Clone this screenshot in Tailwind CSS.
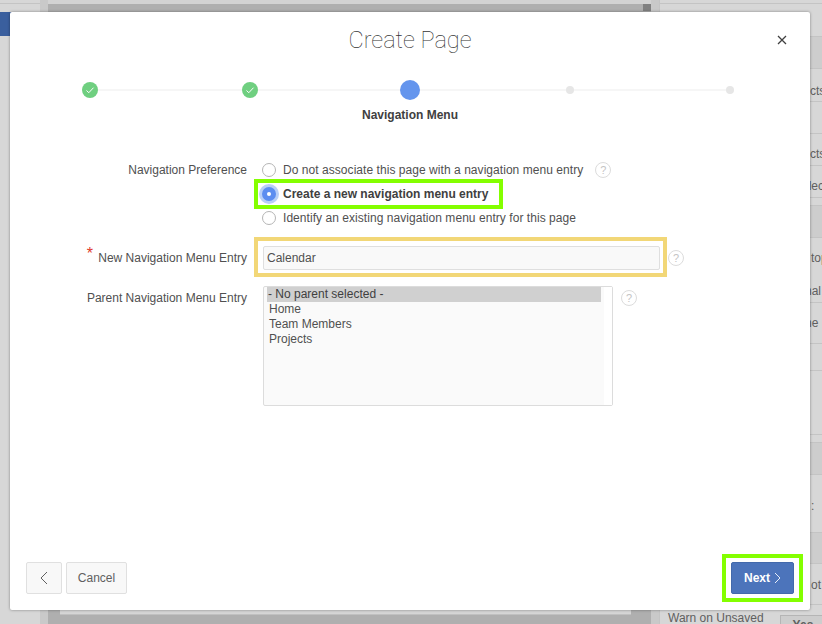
<!DOCTYPE html>
<html lang="en">
<head>
  <meta charset="UTF-8" />
  <title>Create Page</title>
  <script src="https://cdn.jsdelivr.net/npm/@tailwindcss/browser@4"></script>
</head>
<body class="relative w-[822px] h-[624px] overflow-hidden bg-[#d7d7d7] font-['Liberation_Sans',Arial,sans-serif] text-[12px] text-[#404040]">

  <!-- Dimmed page behind the dialog -->
  <div class="flex h-full">
    <div class="w-[40px] flex flex-col">
      <div class="h-[4px] border-b border-[#c4c4c4]"></div>
      <div class="h-[8px]"></div>
      <div class="h-[24px] bg-[#3a5f9e]"></div>
    </div>
    <div class="w-[8px] bg-[#c9c9c9]"></div>
    <div class="w-[603px] bg-[#afafaf] flex flex-col">
      <div class="h-[4px] bg-[#d3d3d3]"></div>
      <div class="h-[7px] flex justify-end"><div class="w-[8px] bg-[#808080]"></div></div>
      <div class="flex-1"></div>
      <div class="h-[9px] ml-[12px] mr-[20px] bg-[#d5d5d5] border-b border-[#c0c0c0]"></div>
      <div class="h-[9px]"></div>
    </div>
    <div class="w-[8px] bg-[#c9c9c9]"></div>
    <div class="flex-1 flex flex-col text-[#606060] whitespace-nowrap overflow-hidden border-l border-[#c4c4c4]">
      <div class="h-[4px] border-b border-[#c4c4c4] shrink-0"></div>
      <div class="h-[32px] shrink-0"></div>
      <div class="h-[33px] shrink-0 bg-[#cdcdcd] border-y border-[#c4c4c4]"></div>
      <div class="h-[32px] shrink-0 pl-[122px] pt-[13px]">Projects</div>
      <div class="h-[32px] shrink-0 border-t border-[#c4c4c4]"></div>
      <div class="h-[32px] shrink-0 pl-[122px] pt-[11px] border-t border-[#c4c4c4]">Projects</div>
      <div class="h-[32px] shrink-0 pl-[134px] pt-[11px] border-t border-[#c4c4c4]">Select</div>
      <div class="h-[8px] shrink-0 border-t border-[#c4c4c4]"></div>
      <div class="h-[33px] shrink-0 bg-[#cdcdcd] border-y border-[#c4c4c4]"></div>
      <div class="h-[32px] shrink-0 pl-[151px] pt-[11px]">top</div>
      <div class="h-[32px] shrink-0 pl-[145px] pt-[12px]">nal</div>
      <div class="h-[41px] shrink-0 pl-[145px] pt-[11px] border-t border-[#c4c4c4]">ne</div>
      <div class="h-[27px] shrink-0 border-t border-[#c4c4c4]"></div>
      <div class="h-[64px] shrink-0 border-t border-[#c4c4c4]"></div>
      <div class="h-[8px] shrink-0 border-t border-[#c4c4c4]"></div>
      <div class="h-[33px] shrink-0 bg-[#cdcdcd] border-y border-[#c4c4c4]"></div>
      <div class="h-[57px] shrink-0 pl-[151px] pt-[22px]">:</div>
      <div class="h-[32px] shrink-0 bg-[#cdcdcd] border-y border-[#c4c4c4]"></div>
      <div class="h-[40px] shrink-0 pl-[151px] pt-[12px]">ot</div>
      <div class="flex pl-[8px] pt-[4px] border-t border-[#c4c4c4]">
        <span>Warn on Unsaved</span>
        <span class="ml-[16px] mt-[6px] px-[12px] h-[20px] bg-[#cdcdcd] border border-[#b5b5b5] font-bold">Yes</span>
      </div>
    </div>
  </div>

  <!-- Dialog -->
  <div class="absolute left-[10px] top-[12px] w-[800px] h-[598px] bg-white rounded-[2px] shadow-[0_0_3px_rgba(0,0,0,0.4)] flex flex-col">

    <!-- Title bar -->
    <div class="relative h-[56px] flex items-center justify-center pt-[1px] shrink-0">
      <h1 class="font-['Roboto',sans-serif] font-thin text-[23.5px] text-[#333]">Create Page</h1>
      <button class="absolute right-[22px] top-[22px] w-[12px] h-[12px] flex items-center justify-center">
        <svg width="10" height="10" viewBox="0 0 10 10" fill="none" stroke="#404040" stroke-width="1.3"><path d="M1 1l8 8M9 1l-8 8"/></svg>
      </button>
    </div>

    <!-- Steps -->
    <div class="relative h-[20px] mt-[12px] mx-[70px] w-[660px] flex items-center justify-between shrink-0">
      <div class="absolute left-[10px] right-[10px] top-[9px] h-[2px] bg-[#f6f6f6]"></div>
      <div class="w-[20px] flex justify-center z-10">
        <div class="w-[16px] h-[16px] rounded-full bg-[#6fcf80] flex items-center justify-center">
          <svg width="10" height="10" viewBox="0 0 10 10" fill="none" stroke="#fff" stroke-width="1"><path d="M1.5 5.5l2.3 2.2 4.7-5"/></svg>
        </div>
      </div>
      <div class="w-[20px] flex justify-center z-10">
        <div class="w-[16px] h-[16px] rounded-full bg-[#6fcf80] flex items-center justify-center">
          <svg width="10" height="10" viewBox="0 0 10 10" fill="none" stroke="#fff" stroke-width="1"><path d="M1.5 5.5l2.3 2.2 4.7-5"/></svg>
        </div>
      </div>
      <div class="w-[20px] h-[20px] rounded-full bg-[#6495ed] z-10"></div>
      <div class="w-[20px] flex justify-center z-10"><div class="w-[8px] h-[8px] rounded-full bg-[#e6e6e6]"></div></div>
      <div class="w-[20px] flex justify-center z-10"><div class="w-[8px] h-[8px] rounded-full bg-[#e6e6e6]"></div></div>
    </div>
    <div class="text-center font-bold mt-[8px] leading-[14px] shrink-0">Navigation Menu</div>

    <!-- Form -->
    <div class="grid grid-cols-[237px_1fr] gap-x-[15px] mt-[36px] text-[#505050]">
      <div class="text-right leading-[24px]">Navigation Preference</div>
      <div class="flex flex-col">
        <label class="h-[24px] flex items-center gap-[7px]">
          <input type="radio" name="pref" class="appearance-none w-[14px] h-[14px] rounded-full border border-[#b5b5b5] bg-white" />
          <span class="tracking-[0.05px]">Do not associate this page with a navigation menu entry</span>
          <span class="ml-[5px] w-[16px] h-[16px] rounded-full border border-[#dcdcdc] text-[#c4c4c4] text-[11px] leading-[14px] text-center">?</span>
        </label>
        <label class="relative h-[24px] flex items-center gap-[7px] font-bold text-[#404040]">
          <span class="absolute left-[-8px] top-[-3px] w-[249px] h-[30px] border-4 border-[#84ff00]"></span>
          <span class="relative w-[14px] h-[14px] rounded-full bg-[#5c8df0] shadow-[0_0_0_3px_rgba(100,149,237,0.45)] flex items-center justify-center">
            <span class="w-[4px] h-[4px] rounded-full bg-white"></span>
          </span>
          <span>Create a new navigation menu entry</span>
        </label>
        <label class="h-[24px] flex items-center gap-[7px]">
          <input type="radio" name="pref" class="appearance-none w-[14px] h-[14px] rounded-full border border-[#b5b5b5] bg-white" />
          <span class="tracking-[0.05px]">Identify an existing navigation menu entry for this page</span>
        </label>
      </div>

      <div class="relative text-right mt-[16px] leading-[24px]"><span class="text-[#e0392b] text-[16px] absolute right-[154px] top-[-4px]">*</span>New Navigation Menu Entry</div>
      <div class="relative mt-[16px] flex items-center h-[24px]">
        <span class="absolute left-[-8px] top-[-9px] w-[413px] h-[40px] border-4 border-[#f2d777]"></span>
        <input type="text" value="Calendar" class="relative ml-[1px] w-[397px] h-[24px] px-[3px] bg-[#f9f9f9] border border-[#dfdfdf] rounded-[2px] text-[#505050] outline-none" />
        <span class="ml-[8px] w-[16px] h-[16px] rounded-full border border-[#dcdcdc] text-[#c4c4c4] text-[11px] leading-[14px] text-center">?</span>
      </div>

      <div class="text-right mt-[16px] leading-[24px]">Parent Navigation Menu Entry</div>
      <div class="mt-[16px] flex items-start">
        <div class="ml-[1px] w-[350px] h-[120px] flex bg-[#fafafa] border border-[#dcdcdc] rounded-[2px] text-[#505050] leading-[15px]">
          <div class="flex-1 pl-[3px] pr-[3px]">
            <div class="bg-[#d0d0d0] w-[334px] px-[1px] text-[#404040]">- No parent selected -</div>
            <div class="px-[2px]">Home</div>
            <div class="px-[2px]">Team Members</div>
            <div class="px-[2px]">Projects</div>
          </div>
          <div class="w-[8px] bg-white"></div>
        </div>
        <span class="ml-[8px] mt-[4px] w-[16px] h-[16px] rounded-full border border-[#dcdcdc] text-[#c4c4c4] text-[11px] leading-[14px] text-center">?</span>
      </div>
    </div>

    <!-- Footer -->
    <div class="mt-auto flex items-center justify-between px-[16px] pb-[16px]">
      <div class="flex gap-[4px]">
        <button class="w-[36px] h-[32px] bg-[#f8f8f8] border border-[#e0e0e0] rounded-[2px] flex items-center justify-center">
          <svg width="8" height="14" viewBox="0 0 8 14" fill="none" stroke="#606060" stroke-width="1"><path d="M7 1L1 7l6 6"/></svg>
        </button>
        <button class="w-[61px] h-[32px] bg-[#f8f8f8] border border-[#e0e0e0] rounded-[2px] text-[#606060]">Cancel</button>
      </div>
      <div class="relative">
        <span class="absolute left-[-9px] top-[-8px] w-[81px] h-[48px] border-4 border-[#84ff00]"></span>
        <button class="relative w-[63px] h-[32px] bg-[#4c74bb] border border-[#4369ab] rounded-[2px] text-white font-bold flex items-center justify-center gap-[4px]">
          Next
          <svg width="7" height="12" viewBox="0 0 7 12" fill="none" stroke="#e8eef8" stroke-width="1"><path d="M1 1l5 5-5 5"/></svg>
        </button>
      </div>
    </div>
  </div>
</body>
</html>
